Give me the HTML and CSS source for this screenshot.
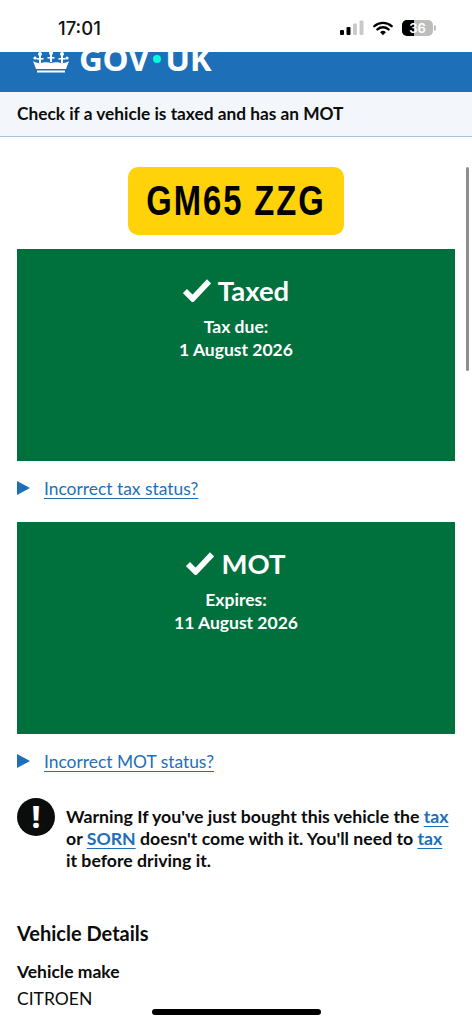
FILE: index.html
```html
<!DOCTYPE html>
<html lang="en">
<head>
  <meta charset="UTF-8">
  <title>Check if a vehicle is taxed and has an MOT</title>
  <link rel="stylesheet" href="styles.css">
</head>
<body>
  <div class="status-bar">
    <span class="clock">17:01</span>
    <div class="status-icons">
      <svg class="signal" width="25" height="16" viewBox="0 0 25 16">
        <rect x="0" y="10" width="4" height="5" rx="1" fill="#000"/>
        <rect x="6.500" y="7" width="4" height="8" rx="1" fill="#000"/>
        <rect x="13" y="3.500" width="4" height="11.500" rx="1" fill="#c9c9c9"/>
        <rect x="19.500" y="0.500" width="4" height="14.500" rx="1" fill="#c9c9c9"/>
      </svg>
      <svg class="wifi" width="20" height="15" viewBox="0 0 22 16">
        <path d="M1.500 5.500a14 14 0 0 1 19 0M4.900 9a9 9 0 0 1 12.200 0" fill="none" stroke="#000" stroke-width="2.600" stroke-linecap="round"/>
        <path d="M11 15.500 7.800 12a4.600 4.600 0 0 1 6.400 0z" fill="#000"/>
      </svg>
      <div class="battery"><span class="battery-fill"></span><span class="battery-num">36</span></div>
      <span class="battery-cap"></span>
    </div>
  </div>

  <header class="gov-header">
    <div class="gov-logo">
      <svg class="crown" width="36" height="22" viewBox="0 0 36 22">
        <g fill="#fff">
          <circle cx="18" cy="2" r="2"/><circle cx="7" cy="3" r="2"/><circle cx="29" cy="3" r="2"/>
          <circle cx="2" cy="7" r="1.600"/><circle cx="34" cy="7" r="1.600"/>
          <rect x="17" y="3" width="2" height="8"/><rect x="6" y="4" width="2" height="8"/><rect x="28" y="4" width="2" height="8"/>
          <rect x="14.500" y="6" width="7" height="1.600"/><rect x="3.500" y="7" width="7" height="1.600"/><rect x="25.500" y="7" width="7" height="1.600"/>
          <path d="M0 10c3 2 7 3 10 1.500 2.500-.5 5.500-.5 8 .5 2.500-1 5.500-1 8-.5 3 1.500 7 .5 10-1.500l-3 8H3z"/>
          <rect x="4" y="19.500" width="28" height="2"/>
        </g>
      </svg>
      <span class="gov-word">GOV<i class="gov-dot"></i>UK</span>
    </div>
  </header>

  <div class="service-bar">Check if a vehicle is taxed and has an MOT</div>

  <main class="content">
    <div class="scrollbar"></div>
    <div class="plate-row"><div class="plate"><span class="plate-text">GM65 ZZG</span></div></div>

    <section class="status-panel">
      <h2 class="status-title">
        <svg class="tick" width="28" height="24" viewBox="0 0 29 24"><path d="M2 13l8 8L27 3" fill="none" stroke="#fff" stroke-width="6"/></svg>
        Taxed
      </h2>
      <p class="status-text">Tax due:<br>1 August 2026</p>
    </section>
    <div class="details-row">
      <span class="arrow"></span>
      <a href="#" class="details-link">Incorrect tax status?</a>
    </div>

    <section class="status-panel">
      <h2 class="status-title">
        <svg class="tick" width="28" height="24" viewBox="0 0 29 24"><path d="M2 13l8 8L27 3" fill="none" stroke="#fff" stroke-width="6"/></svg>
        MOT
      </h2>
      <p class="status-text">Expires:<br>11 August 2026</p>
    </section>
    <div class="details-row">
      <span class="arrow"></span>
      <a href="#" class="details-link">Incorrect MOT status?</a>
    </div>

    <div class="warning">
      <span class="warning-icon">!</span>
      <p class="warning-text">Warning If you've just bought this vehicle the <a href="#">tax</a> or <a href="#">SORN</a> doesn't come with it. You'll need to <a href="#">tax</a> it before driving it.</p>
    </div>

    <h3 class="details-heading">Vehicle Details</h3>
    <div class="detail-label">Vehicle make</div>
    <div class="detail-value">CITROEN</div>
  </main>

  <div class="home-indicator"></div>
</body>
</html>
```

FILE: styles.css
```css
:root {
  --blue: #1d70b8;
  --green: #00703c;
  --text: #0b0c0c;
}

html, body {
  height: 1024px;
  overflow: hidden;
}

body {
  margin: 0;
  position: relative;
  background: #fff;
  color: var(--text);
  font-family: Lato, "Noto Sans", Arial, sans-serif;
}

.status-bar {
  height: 52px;
  display: flex;
  align-items: center;
  justify-content: space-between;
  padding: 4px 36px 0 58px;
  box-sizing: border-box;
}

.clock {
  font-family: Inter, sans-serif;
  font-size: 18.500px;
  font-weight: 500;
  color: #111;
}

.status-icons {
  display: flex;
  align-items: center;
}

.wifi {
  margin-left: 8px;
  margin-right: 9px;
}

.battery {
  position: relative;
  width: 31px;
  height: 16px;
  border-radius: 5px;
  background: #bdbdbd;
  overflow: hidden;
}

.battery-fill {
  position: absolute;
  left: 0;
  top: 0;
  bottom: 0;
  width: 12px;
  background: #000;
}

.battery-num {
  position: absolute;
  left: 0;
  right: 0;
  top: 0;
  text-align: center;
  font-family: Inter, sans-serif;
  font-size: 13px;
  font-weight: 600;
  line-height: 16px;
  color: #fff;
}

.battery-cap {
  width: 2px;
  height: 6px;
  margin-left: 1px;
  border-radius: 0 2px 2px 0;
  background: #bdbdbd;
}

.gov-header {
  height: 40px;
  background: var(--blue);
  overflow: hidden;
  display: flex;
  align-items: flex-end;
  padding: 0 0 19px 33px;
  box-sizing: border-box;
}

.gov-logo {
  display: flex;
  align-items: flex-end;
  gap: 10px;
}

.gov-word {
  font-family: "Noto Sans", sans-serif;
  font-weight: 700;
  font-size: 33px;
  letter-spacing: -0.3px;
  line-height: 30px;
  height: 30px;
  margin-bottom: -1px;
  color: #fff;
  display: flex;
  align-items: center;
}

.gov-dot {
  width: 8px;
  height: 8px;
  margin: 0 4px;
  border-radius: 50%;
  background: #00ffe0;
}

.service-bar {
  height: 44px;
  line-height: 43px;
  padding-left: 17px;
  background: #f3f7fb;
  border-bottom: 1px solid #a5c6e3;
  font-size: 17.300px;
  font-weight: 700;
}

.content {
  padding: 30px 17px 0;
}

.scrollbar {
  position: absolute;
  left: 466px;
  top: 167px;
  width: 3px;
  height: 204px;
  border-radius: 2px;
  background: #8e8e8e;
}

.plate-row {
  display: flex;
  justify-content: center;
}

.plate {
  width: 216px;
  height: 68px;
  border-radius: 10px;
  background: #ffd20a;
  color: #000;
  display: flex;
  align-items: center;
  justify-content: center;
  font-family: "Liberation Sans", sans-serif;
  font-size: 42px;
  font-weight: 700;
  white-space: nowrap;
}

.plate-text {
  display: inline-block;
  letter-spacing: 2.500px;
  transform: scaleX(0.78);
}

.status-panel {
  height: 212px;
  padding-top: 23px;
  box-sizing: border-box;
  background: var(--green);
  color: #fff;
  text-align: center;
}

.plate-row + .status-panel {
  margin-top: 14px;
}

.status-title {
  margin: 0;
  display: flex;
  align-items: center;
  justify-content: center;
  gap: 7px;
  height: 36px;
  font-size: 27.500px;
  font-weight: 700;
}

.status-text {
  margin: 7px 0 0;
  font-size: 17.500px;
  font-weight: 700;
  line-height: 23px;
}

.details-row {
  height: 61px;
  display: flex;
  align-items: flex-start;
  padding-top: 15px;
  box-sizing: border-box;
  gap: 14px;
}

.arrow {
  width: 0;
  height: 0;
  margin-top: 5px;
  border-left: 13px solid var(--blue);
  border-top: 7.500px solid transparent;
  border-bottom: 7.500px solid transparent;
}

.details-link {
  font-size: 17.400px;
  line-height: 25px;
  color: var(--blue);
  text-underline-offset: 3px;
}

.warning {
  display: flex;
  gap: 11px;
  margin-top: 3px;
}

.warning-icon {
  flex: none;
  width: 38px;
  height: 38px;
  border-radius: 50%;
  background: var(--text);
  color: #fff;
  font-family: "Noto Sans", sans-serif;
  font-size: 30px;
  font-weight: 800;
  line-height: 38px;
  text-align: center;
}

.warning-text {
  margin: 0;
  max-width: 386px;
  font-size: 17.700px;
  font-weight: 700;
  line-height: 22px;
  padding-top: 8px;
}

.warning-text a {
  color: var(--blue);
  text-underline-offset: 3px;
}

.details-heading {
  margin: 48px 0 0;
  font-size: 20px;
  font-weight: 700;
  line-height: 26px;
}

.detail-label {
  margin-top: 14px;
  font-size: 17.500px;
  font-weight: 700;
  line-height: 24px;
}

.detail-value {
  margin-top: 3px;
  font-size: 17.500px;
  line-height: 24px;
}

.home-indicator {
  position: absolute;
  left: 152px;
  top: 1009px;
  width: 169px;
  height: 6px;
  border-radius: 3px;
  background: #000;
}
```
